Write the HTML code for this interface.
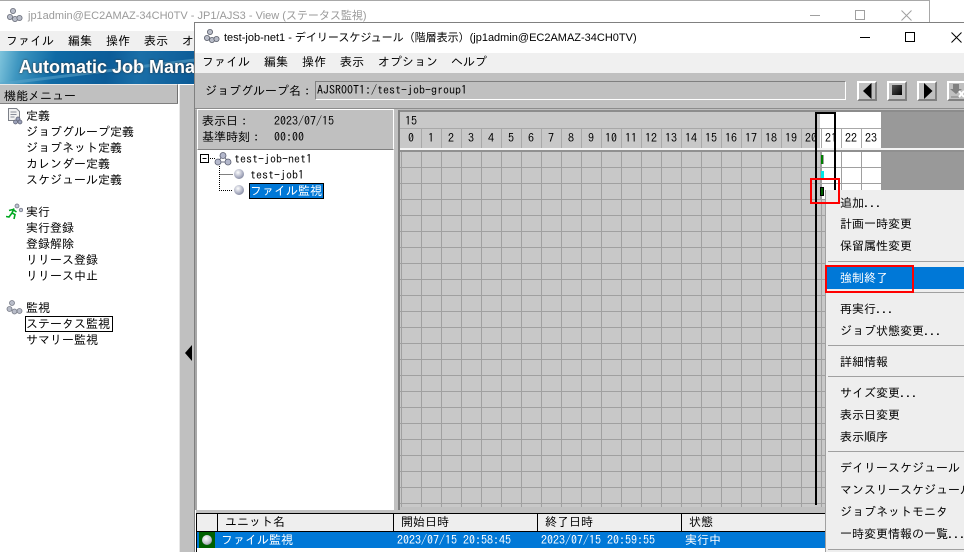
<!DOCTYPE html>
<html lang="ja"><head><meta charset="utf-8"><title>JP1/AJS3</title>
<style>
html,body{margin:0;padding:0;background:#fff}
#r{position:relative;width:964px;height:552px;overflow:hidden;background:#fff;font:12px/16px "IPAGothic","Liberation Mono","Noto Sans CJK JP",monospace;color:#000}
.a{position:absolute}
.t{position:absolute;white-space:pre;line-height:16px;height:16px}
.ti{position:absolute;white-space:pre;font:11px/16px "Liberation Sans","Noto Sans CJK JP",sans-serif}
.w{color:#fff}
.h{position:absolute;top:130px;width:20px;text-align:center;line-height:16px}
.sep{position:absolute;left:828px;width:136px;height:1px;background:#a0a0a0}
.btn{position:absolute;top:81px;width:16px;height:16px;background:#c0c0c0;border:2px solid;border-color:#fff #808080 #808080 #fff}
.ball{position:absolute;width:10px;height:10px;border-radius:50%;background:radial-gradient(circle at 40% 35%,#fff,#a8acc0 55%,#5a5e78)}
</style></head><body><div id="r">

<!-- main window -->
<div class="a" style="left:0;top:0;width:930px;height:1px;background:#a8a8a8"></div>
<div class="a" style="left:929px;top:0;width:1px;height:23px;background:#a8a8a8"></div>
<svg class="a" style="left:6px;top:7px" width="18" height="16" viewBox="0 0 18 16"><g fill="#b8bcc8" stroke="#6a6e7a" stroke-width=".8"><circle cx="7" cy="4" r="2.6"/><circle cx="4" cy="10" r="2.6"/><circle cx="9" cy="12" r="2.6"/><circle cx="13.5" cy="11" r="2.6"/></g></svg>
<div class="ti" style="left:28px;top:8px;color:#9a9a9a">jp1admin@EC2AMAZ-34CH0TV - JP1/AJS3 - View (ステータス監視)</div>
<div class="a" style="left:810px;top:15px;width:10px;height:1px;background:#a0a0a0"></div>
<div class="a" style="left:855px;top:10px;width:8px;height:8px;border:1px solid #a0a0a0"></div>
<svg class="a" style="left:901px;top:10px" width="11" height="11"><path d="M.5.5l10 10M10.500.5l-10 10" stroke="#a0a0a0" fill="none"/></svg>

<div class="a" style="left:0;top:31px;width:196px;height:20px;background:#f0f0f0"></div>
<div class="t" style="left:6px;top:33px">ファイル</div>
<div class="t" style="left:68px;top:33px">編集</div>
<div class="t" style="left:106px;top:33px">操作</div>
<div class="t" style="left:144px;top:33px">表示</div>
<div class="t" style="left:182px;top:33px">オ</div>

<div class="a" style="left:0;top:51px;width:196px;height:33px;background:linear-gradient(100deg,#7fc4dc 0,#3e96c0 10%,#0f6aa5 28%,#0c5c98 55%,#1a6fa8 70%,#0b5a96 100%);overflow:hidden">
  <div class="a" style="left:-20px;top:18px;width:260px;height:3px;background:#5da6cc;opacity:.55;transform:rotate(-7deg)"></div>
  <div class="a" style="left:19px;top:5px;white-space:pre;font:bold 18px/22px 'Liberation Sans',sans-serif;color:#fff;text-shadow:0 0 2px #333">Automatic Job Mana</div>
</div>

<!-- left menu -->
<div class="a" style="left:0;top:84px;width:177px;height:19px;background:#c0c0c0;border-top:1px solid #e8e8e8;border-right:1px solid #707070;border-bottom:0"></div>
<div class="a" style="left:0;top:103px;width:178px;height:1px;background:#808080"></div>
<div class="t" style="left:4px;top:88px">機能メニュー</div>

<svg class="a" style="left:7px;top:108px" width="17" height="17" viewBox="0 0 17 17"><path d="M1.500.5h8l3 3v9h-11z" fill="#f2f2f2" stroke="#7c8088"/><path d="M3.500 4h6M3.500 6.500h6M3.500 9h4" stroke="#8a8e98"/><g fill="#9aa0b8" stroke="#5a5e70" stroke-width=".7"><circle cx="11" cy="11" r="2"/><circle cx="8.500" cy="14" r="2"/><circle cx="13" cy="14" r="2"/></g></svg>
<div class="t" style="left:26px;top:108px">定義</div>
<div class="t" style="left:26px;top:124px">ジョブグループ定義</div>
<div class="t" style="left:26px;top:140px">ジョブネット定義</div>
<div class="t" style="left:26px;top:156px">カレンダー定義</div>
<div class="t" style="left:26px;top:172px">スケジュール定義</div>

<svg class="a" style="left:6px;top:203px" width="17" height="17" viewBox="0 0 17 17"><circle cx="11" cy="3" r="2" fill="#c0c4d4" stroke="#666a78" stroke-width=".7"/><circle cx="15" cy="7" r="1.800" fill="#c0c4d4" stroke="#666a78" stroke-width=".7"/><path d="M8 5.500L6 10l3 1.500L8 16M6 10L3 14 0 13.500M7 6.500l-4 1M7.500 7l3 2" stroke="#00a820" stroke-width="1.600" fill="none"/></svg>
<div class="t" style="left:26px;top:204px">実行</div>
<div class="t" style="left:26px;top:220px">実行登録</div>
<div class="t" style="left:26px;top:236px">登録解除</div>
<div class="t" style="left:26px;top:252px">リリース登録</div>
<div class="t" style="left:26px;top:268px">リリース中止</div>

<svg class="a" style="left:6px;top:299px" width="17" height="17" viewBox="0 0 17 17"><g fill="#b8bcc8" stroke="#767a86" stroke-width=".8"><circle cx="6" cy="4" r="2.500"/><circle cx="3.500" cy="10" r="2.500"/><circle cx="8.500" cy="12.500" r="2.500"/><circle cx="13.500" cy="12" r="2.500"/></g></svg>
<div class="t" style="left:26px;top:300px">監視</div>
<div class="a" style="left:25px;top:316px;width:86px;height:14px;border:1px solid #000"></div>
<div class="t" style="left:26px;top:316px">ステータス監視</div>
<div class="t" style="left:26px;top:332px">サマリー監視</div>

<!-- vertical splitter -->
<div class="a" style="left:179px;top:85px;width:16px;height:467px;background:#c0c0c0;border-left:1px solid #e8e8e8;box-sizing:border-box"></div>
<div class="a" style="left:194px;top:85px;width:2px;height:467px;background:#707070"></div>
<svg class="a" style="left:184px;top:344px" width="9" height="18"><path d="M8 1v16L1 9z" fill="#000"/></svg>

<!-- sub window -->
<div class="a" style="left:195px;top:23px;width:769px;height:529px;background:#fff"></div>
<div class="a" style="left:195px;top:22px;width:769px;height:1px;background:#808080"></div>
<div class="a" style="left:194px;top:22px;width:1px;height:530px;background:#808080"></div>
<svg class="a" style="left:203px;top:28px" width="18" height="16" viewBox="0 0 18 16"><g fill="#b8bcc8" stroke="#5a5e6a" stroke-width=".8"><circle cx="7" cy="4" r="2.600"/><circle cx="4" cy="10" r="2.600"/><circle cx="9" cy="12" r="2.600"/><circle cx="13.500" cy="11" r="2.600"/></g></svg>
<div class="ti" style="left:224px;top:30px">test-job-net1 - デイリースケジュール（階層表示）(jp1admin@EC2AMAZ-34CH0TV)</div>
<div class="a" style="left:860px;top:37px;width:10px;height:1px;background:#000"></div>
<div class="a" style="left:905px;top:32px;width:8px;height:8px;border:1px solid #000"></div>
<svg class="a" style="left:951px;top:32px" width="11" height="11"><path d="M.5.5l10 10M10.500.5l-10 10" stroke="#000" fill="none"/></svg>

<div class="a" style="left:195px;top:53px;width:769px;height:20px;background:#f0f0f0"></div>
<div class="t" style="left:202px;top:54px">ファイル</div>
<div class="t" style="left:264px;top:54px">編集</div>
<div class="t" style="left:302px;top:54px">操作</div>
<div class="t" style="left:340px;top:54px">表示</div>
<div class="t" style="left:378px;top:54px">オプション</div>
<div class="t" style="left:451px;top:54px">ヘルプ</div>

<!-- toolbar -->
<div class="a" style="left:195px;top:73px;width:769px;height:37px;background:#c0c0c0"></div>
<div class="t" style="left:205px;top:83px">ジョブグループ名：</div>
<div class="a" style="left:315px;top:81px;width:529px;height:17px;background:#c0c0c0;border:1px solid;border-color:#808080 #fff #fff #808080"></div>
<div class="t" style="left:317px;top:82px">AJSROOT1:/test-job-group1</div>
<div class="btn" style="left:857px"></div>
<svg class="a" style="left:862px;top:83px" width="11" height="16"><path d="M9.500 0v16L1 8z" fill="#000"/></svg>
<div class="btn" style="left:887px"></div>
<div class="a" style="left:892px;top:85px;width:10px;height:10px;background:linear-gradient(135deg,#555,#000)"></div>
<div class="btn" style="left:917px"></div>
<svg class="a" style="left:923px;top:83px" width="11" height="16"><path d="M1 0v16L9.500 8z" fill="#000"/></svg>
<div class="btn" style="left:947px;width:20px"></div>
<svg class="a" style="left:950px;top:83px" width="14" height="16"><path d="M3 1h6v5h3L6 11 0 6h3z" fill="#808080"/><path d="M1 14h8" stroke="#808080"/><path d="M9 8l5 6M14 8l-5 6" stroke="#fff" stroke-width="2"/></svg>

<!-- info panel + tree -->
<div class="a" style="left:195px;top:108px;width:769px;height:1px;background:#8c8c8c"></div>
<div class="a" style="left:195px;top:110px;width:2px;height:400px;background:#a8a8a8"></div>
<div class="a" style="left:197px;top:109px;width:195px;height:39px;background:#c0c0c0;border:1px solid;border-color:#fff #fff #808080 #fff"></div>
<div class="t" style="left:202px;top:113px">表示日：</div>
<div class="t" style="left:274px;top:113px">2023/07/15</div>
<div class="t" style="left:202px;top:129px">基準時刻：</div>
<div class="t" style="left:274px;top:129px">00:00</div>

<div class="a" style="left:197px;top:150px;width:197px;height:359px;background:#fff"></div>
<svg class="a" style="left:199px;top:152px" width="60" height="46"><path d="M1.500 2.500h8v8h-8zM3.500 6.500h4" stroke="#000" fill="none"/><path d="M11 6.500h5M20.500 14v24.500h13M20.500 22.500h13" stroke="#000" stroke-dasharray="1 1" fill="none"/><path d="M24 3l-5 7h10z" fill="none" stroke="#6a6e80"/><g fill="#b4b8cc" stroke="#5a5e70" stroke-width=".8"><circle cx="24" cy="3.500" r="3"/><circle cx="19" cy="10" r="3"/><circle cx="29" cy="10" r="3"/></g></svg>
<div class="t" style="left:234px;top:151px">test-job-net1</div>
<div class="ball" style="left:234px;top:169px"></div>
<div class="t" style="left:250px;top:167px">test-job1</div>
<div class="ball" style="left:234px;top:185px"></div>
<div class="a" style="left:249px;top:183px;width:73px;height:14px;background:#0078d7;border:1px solid #000"></div>
<div class="t w" style="left:250px;top:183px">ファイル監視</div>

<!-- splitter -->
<div class="a" style="left:394px;top:110px;width:4px;height:400px;background:#c0c0c0"></div>
<div class="a" style="left:398px;top:110px;width:2px;height:400px;background:#808080"></div>

<!-- schedule area -->
<div class="a" style="left:400px;top:110px;width:564px;height:2px;background:#8c8c8c"></div>
<div class="a" style="left:400px;top:112px;width:420px;height:36px;background:#c8c8c8"></div>
<div class="a" style="left:820px;top:112px;width:61px;height:36px;background:#fff"></div>
<div class="a" style="left:881px;top:112px;width:83px;height:36px;background:#999"></div>
<div class="a" style="left:816px;top:112px;width:4px;height:36px;background:#c8c8c8"></div>
<div class="a" style="left:400px;top:128px;width:481px;height:1px;background:#a8a8a8"></div>
<div class="a" style="left:421px;top:128px;width:460px;height:20px;background:repeating-linear-gradient(90deg,#a8a8a8 0,#a8a8a8 1px,transparent 1px,transparent 20px)"></div>
<div class="t" style="left:405px;top:113px">15</div>
<div class="h" style="left:401px">0</div><div class="h" style="left:421px">1</div><div class="h" style="left:441px">2</div><div class="h" style="left:461px">3</div><div class="h" style="left:481px">4</div><div class="h" style="left:501px">5</div><div class="h" style="left:521px">6</div><div class="h" style="left:541px">7</div><div class="h" style="left:561px">8</div><div class="h" style="left:581px">9</div><div class="h" style="left:601px">10</div><div class="h" style="left:621px">11</div><div class="h" style="left:641px">12</div><div class="h" style="left:661px">13</div><div class="h" style="left:681px">14</div><div class="h" style="left:701px">15</div><div class="h" style="left:721px">16</div><div class="h" style="left:741px">17</div><div class="h" style="left:761px">18</div><div class="h" style="left:781px">19</div><div class="h" style="left:801px">20</div><div class="h" style="left:821px">21</div><div class="h" style="left:841px">22</div><div class="h" style="left:861px">23</div>

<div class="a" style="left:400px;top:148px;width:564px;height:2px;background:#f4f4f4"></div>
<div class="a" style="left:400px;top:150px;width:564px;height:2px;background:#909090"></div>
<div class="a" style="left:400px;top:152px;width:425px;height:355px;background-color:#c8c8c8;background-image:repeating-linear-gradient(90deg,#a0a0a0 0,#a0a0a0 1px,transparent 1px,transparent 20px),repeating-linear-gradient(180deg,transparent 0,transparent 15px,#a0a0a0 15px,#a0a0a0 16px);background-position:1px 0,0 0"></div>
<div class="a" style="left:881px;top:152px;width:83px;height:40px;background:#999"></div>
<div class="a" style="left:820px;top:152px;width:61px;height:48px;background-color:#fff;background-image:repeating-linear-gradient(90deg,#a0a0a0 0,#a0a0a0 1px,transparent 1px,transparent 20px),repeating-linear-gradient(180deg,transparent 0,transparent 15px,#a0a0a0 15px,#a0a0a0 16px);background-position:1px 0,0 0"></div>
<div class="a" style="left:400px;top:507px;width:425px;height:3px;background:#c0c0c0"></div>

<!-- bars -->
<div class="a" style="left:820px;top:155px;width:4px;height:9px;background:#008000;border-left:1px solid #a0a0a0;border-right:1px solid #a0a0a0;box-sizing:border-box"></div>
<div class="a" style="left:820px;top:171px;width:4px;height:7px;background:#00e8e8;border-left:1px solid #a0a0a0;box-sizing:border-box"></div>
<div class="a" style="left:820px;top:187px;width:4px;height:9px;background:#006000;border:1px solid #000;box-sizing:border-box"></div>

<!-- black indicator -->
<div class="a" style="left:815px;top:112px;width:2px;height:393px;background:#000"></div>
<div class="a" style="left:815px;top:112px;width:21px;height:2px;background:#000"></div>
<div class="a" style="left:834px;top:112px;width:2px;height:78px;background:#000"></div>

<!-- bottom table -->
<div class="a" style="left:196px;top:510px;width:629px;height:3px;background:#c0c0c0"></div>
<div class="a" style="left:196px;top:513px;width:629px;height:1px;background:#000"></div>
<div class="a" style="left:196px;top:513px;width:1px;height:39px;background:#000"></div>
<div class="a" style="left:197px;top:514px;width:628px;height:17px;background:#eee"></div>
<div class="a" style="left:196px;top:531px;width:629px;height:1px;background:#000"></div>
<div class="a" style="left:217px;top:514px;width:1px;height:17px;background:#000"></div>
<div class="a" style="left:393px;top:514px;width:1px;height:17px;background:#000"></div>
<div class="a" style="left:537px;top:514px;width:1px;height:17px;background:#000"></div>
<div class="a" style="left:681px;top:514px;width:1px;height:17px;background:#000"></div>
<div class="t" style="left:225px;top:514px">ユニット名</div>
<div class="t" style="left:401px;top:514px">開始日時</div>
<div class="t" style="left:545px;top:514px">終了日時</div>
<div class="t" style="left:689px;top:514px">状態</div>
<div class="a" style="left:197px;top:532px;width:628px;height:16px;background:#0078d7"></div>
<div class="a" style="left:199px;top:532px;width:16px;height:16px;background:#006000"></div>
<div class="a" style="left:202px;top:535px;width:10px;height:10px;border-radius:50%;background:radial-gradient(circle at 40% 35%,#fff,#c0c4cc 55%,#60646c)"></div>
<div class="t w" style="left:221px;top:532px">ファイル監視</div>
<div class="t w" style="left:397px;top:532px">2023/07/15 20:58:45</div>
<div class="t w" style="left:541px;top:532px">2023/07/15 20:59:55</div>
<div class="t w" style="left:685px;top:532px">実行中</div>

<!-- context menu -->
<div class="a" style="left:825px;top:190px;width:139px;height:362px;background:#eee;border-left:1px solid #a0a0a0;box-sizing:border-box"></div>
<div class="t" style="left:840px;top:195px">追加...</div>
<div class="t" style="left:840px;top:216px">計画一時変更</div>
<div class="t" style="left:840px;top:238px">保留属性変更</div>
<div class="sep" style="top:261px"></div>
<div class="a" style="left:826px;top:267px;width:138px;height:22px;background:#0078d7"></div>
<div class="t w" style="left:840px;top:270px">強制終了</div>
<div class="sep" style="top:292px"></div>
<div class="t" style="left:840px;top:301px">再実行...</div>
<div class="t" style="left:840px;top:323px">ジョブ状態変更...</div>
<div class="sep" style="top:345px"></div>
<div class="t" style="left:840px;top:354px">詳細情報</div>
<div class="sep" style="top:376px"></div>
<div class="t" style="left:840px;top:385px">サイズ変更...</div>
<div class="t" style="left:840px;top:407px">表示日変更</div>
<div class="t" style="left:840px;top:429px">表示順序</div>
<div class="sep" style="top:451px"></div>
<div class="t" style="left:840px;top:460px">デイリースケジュール</div>
<div class="t" style="left:840px;top:482px">マンスリースケジュール</div>
<div class="t" style="left:840px;top:504px">ジョブネットモニタ</div>
<div class="t" style="left:840px;top:526px">一時変更情報の一覧...</div>
<div class="sep" style="top:549px"></div>

<!-- red highlight rectangles -->
<div class="a" style="left:810px;top:178px;width:26px;height:22px;border:2px solid #f00"></div>
<div class="a" style="left:825px;top:265px;width:85px;height:24px;border:2px solid #f00"></div>

</div></body></html>
